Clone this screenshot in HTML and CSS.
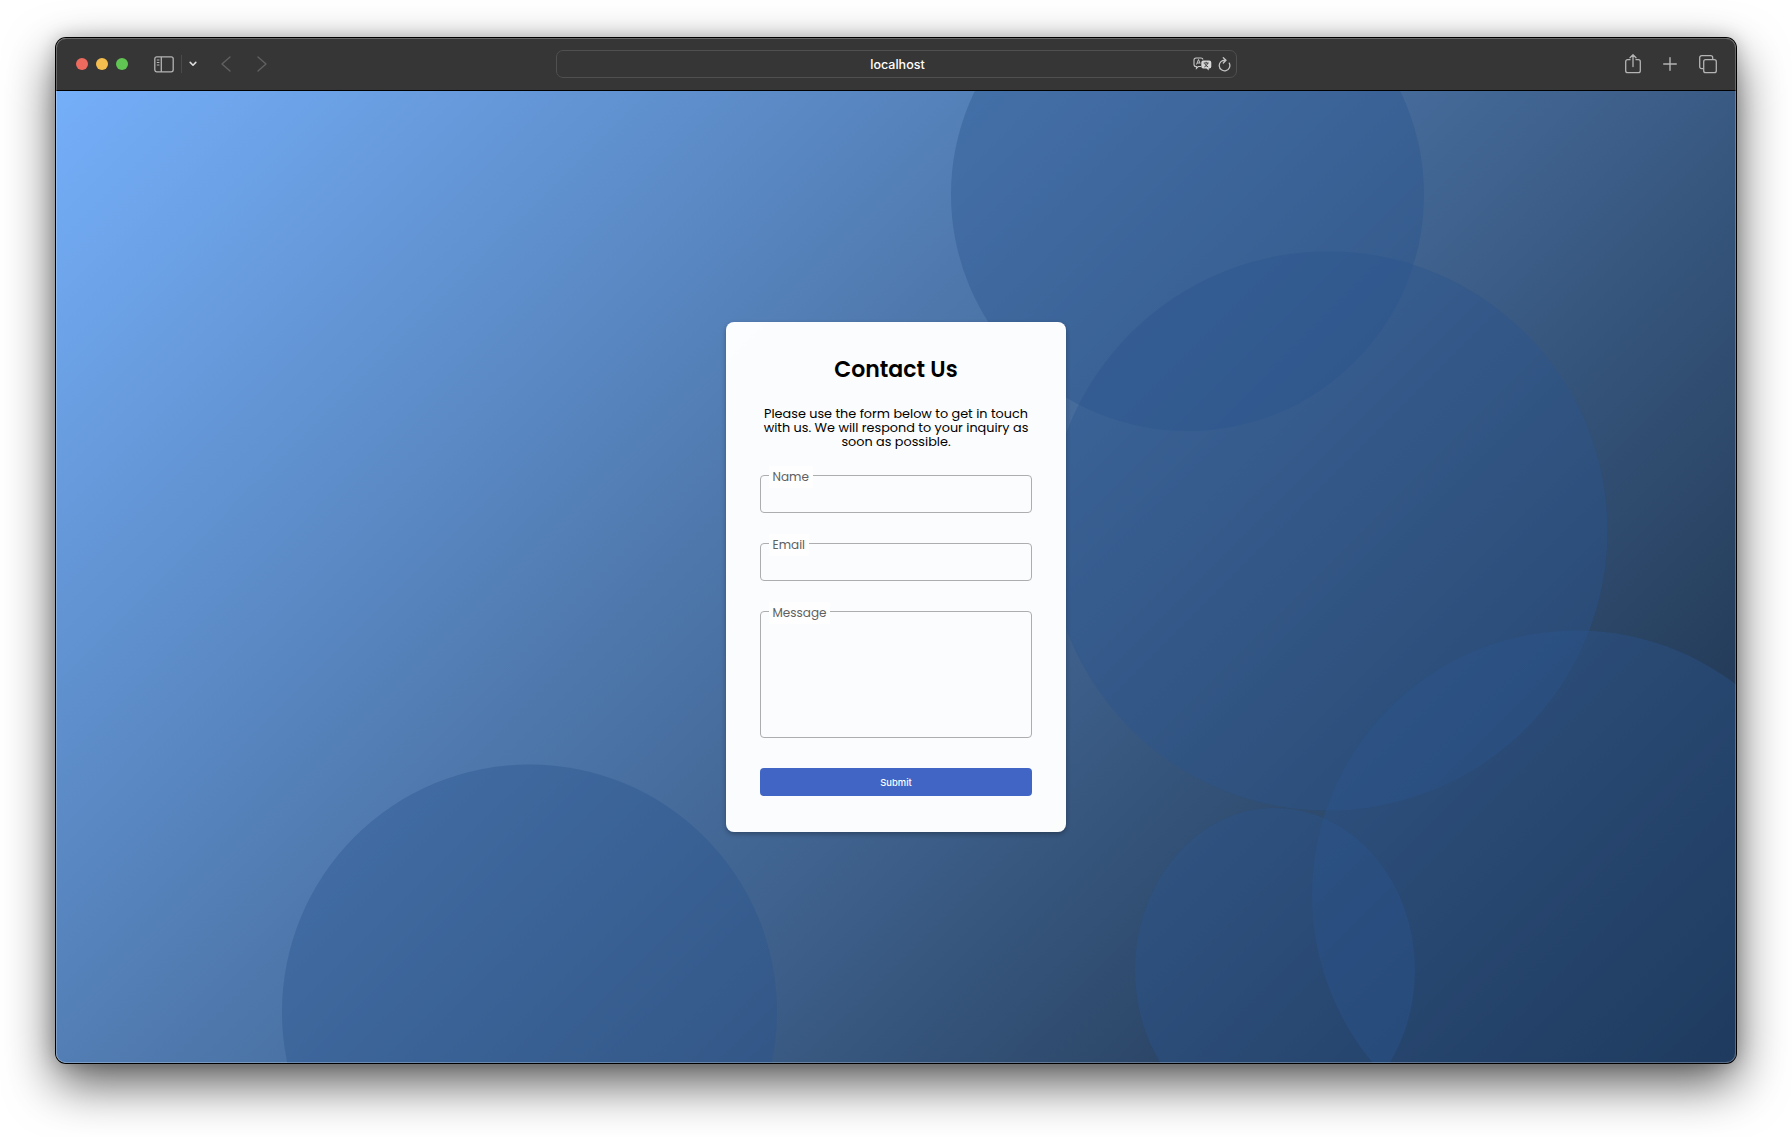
FILE: index.html
```html
<!DOCTYPE html>
<html lang="en">
<head>
<meta charset="utf-8">
<title>Contact Us</title>
<link rel="stylesheet" href="styles.css">
</head>
<body>
<div class="window">
  <header class="toolbar">
    <div class="left">
      <div class="lights"><i class="red"></i><i class="yellow"></i><i class="green"></i></div>
      <svg class="sidebar" width="20" height="17" viewBox="0 0 20 17" fill="none" stroke="#b4b4b4" stroke-width="1.3"><rect x=".8" y=".8" width="18.4" height="15" rx="2"/><path d="M7.3 1v15"/><path d="M2.8 4h2.6M2.8 6.5h2.6M2.8 9h2.6" stroke-width="1"/></svg>
      <span class="divider"></span>
      <svg class="chevron" width="8" height="6" viewBox="0 0 8 6" fill="none" stroke="#dcdcdc" stroke-width="1.6" stroke-linecap="round" stroke-linejoin="round"><path d="M1.2 1.4L4 4.2l2.8-2.8"/></svg>
      <svg class="back" width="10" height="16" viewBox="0 0 10 16" fill="none" stroke="#606060" stroke-width="1.4" stroke-linecap="round" stroke-linejoin="round"><path d="M9 1L1 8l8 7"/></svg>
      <svg class="forward" width="10" height="16" viewBox="0 0 10 16" fill="none" stroke="#606060" stroke-width="1.4" stroke-linecap="round" stroke-linejoin="round"><path d="M1 1l8 7-8 7"/></svg>
    </div>
    <div class="address">
      <span class="host">localhost</span>
      <span class="tools">
        <svg width="19" height="14" viewBox="0 0 19 14" fill="none"><path d="M8 9.5H5.2L3.4 11.4V9.5H3A2 2 0 0 1 1 7.5V3A2 2 0 0 1 3 1h5a2 2 0 0 1 2 1.5" stroke="#c8c8c8" stroke-width="1.1"/><path d="M3.5 7.5l2-5 1.6 4M4.2 6h2.6" stroke="#c8c8c8" stroke-width="1"/><path d="M10.3 3.5h6a2 2 0 0 1 2 2v4a2 2 0 0 1-2 2h-.6v2.1l-2.2-2.1h-3.2a2 2 0 0 1-2-2v-4a2 2 0 0 1 2-2z" fill="#d8d8d8"/><path d="M10.7 6h5M13.2 4.8V6M11.3 10q2.8-1.2 3.4-3.8M11.7 6.5q1 2.6 3.5 3.5" stroke="#363636" stroke-width=".9"/></svg>
        <svg width="13" height="15" viewBox="0 0 13 15" fill="none" stroke="#c4c4c4" stroke-width="1.3" stroke-linecap="round" stroke-linejoin="round"><path d="M11.3 6.2A5.3 5.3 0 1 1 7.3 3.3H5.8M5.3.8l2.7 2.5-2.7 2.7"/></svg>
      </span>
    </div>
    <div class="right">
      <svg width="16" height="20" viewBox="0 0 16 20" fill="none" stroke="#b4b4b4" stroke-width="1.3" stroke-linecap="round" stroke-linejoin="round"><path d="M5 5.7H2.7A2 2 0 0 0 .7 7.7v9a2 2 0 0 0 2 2h10.6a2 2 0 0 0 2-2v-9a2 2 0 0 0-2-2H11M8 12.5V1M5 3.7L8 .8l3 2.9"/></svg>
      <svg width="14" height="14" viewBox="0 0 14 14" fill="none" stroke="#b4b4b4" stroke-width="1.4" stroke-linecap="round"><path d="M7 .7v12.6M.7 7h12.6"/></svg>
      <svg width="18" height="19" viewBox="0 0 18 19" fill="none" stroke="#b4b4b4" stroke-width="1.3"><rect x="4.7" y="4.7" width="12.6" height="13" rx="2"/><path d="M4.5 13.7H2.7a2 2 0 0 1-2-2V2.7a2 2 0 0 1 2-2h9a2 2 0 0 1 2 2V4.7"/></svg>
    </div>
  </header>
  <main class="page">
    <svg class="bubbles" width="1680" height="972" viewBox="0 0 1680 972">
      <circle cx="1131.5" cy="103.5" r="236.5"/>
      <circle cx="1272" cy="440" r="279.5"/>
      <circle cx="1520" cy="803.5" r="264"/>
      <ellipse cx="1219" cy="879" rx="140" ry="162"/>
      <circle cx="473.5" cy="921" r="247.5"/>
    </svg>
    <form class="card">
      <h1>Contact Us</h1>
      <p>Please use the form below to get in touch<br>with us. We will respond to your inquiry as<br>soon as possible.</p>
      <div class="field"><label>Name</label></div>
      <div class="field"><label>Email</label></div>
      <div class="field message"><label>Message</label></div>
      <button type="button">Submit</button>
    </form>
  </main>
</div>
</body>
</html>
```
FILE: styles.css
```css
* { box-sizing: border-box; }
body { margin: 0; padding: 38px 56px 0; background: #fff; height: 1137px; overflow: hidden; font-family: Poppins, "Open Sans", sans-serif; }
.window { position: relative; width: 1680px; height: 1025px; border-radius: 10px; box-shadow: 0 0 0 1px #000, 0 20px 50px rgba(0,0,0,.66), 0 0 18px rgba(0,0,0,.22); overflow: hidden; }
.window::after { content: ""; position: absolute; inset: 0; border-radius: 10px; border: 1px solid rgba(255,255,255,.25); pointer-events: none; }
.toolbar { height: 53px; background: #363636; border-bottom: 1px solid #000; display: grid; grid-template-columns: 500px 681px 1fr; align-items: center; }
.left { display: flex; align-items: center; padding-left: 20px; }
.lights { display: flex; gap: 8px; margin-right: 26px; }
.lights i { width: 12px; height: 12px; border-radius: 50%; }
.red { background: #ed6a5e; }
.yellow { background: #f5bf4f; }
.green { background: #61c554; }
.divider { width: 1px; height: 18px; background: #4a4a4a; margin: 0 7px; }
.chevron { margin-right: 24px; }
.back { margin-right: 26px; }
.address { height: 28px; border: 1px solid #505050; border-radius: 7px; display: grid; grid-template-columns: 1fr auto 1fr; align-items: center; }
.host { grid-column: 2; color: #fff; font: 500 12.5px/16px Inter, sans-serif; padding: 1px 0 0 2px; }
.tools { display: flex; justify-content: flex-end; align-items: center; gap: 6px; padding-right: 5px; }
.right { display: flex; justify-content: flex-end; align-items: center; gap: 22px; padding-right: 19px; }
.page { height: 972px; display: grid; place-items: center; background: linear-gradient(135deg, #75aff9, #17293f); }
.bubbles { grid-area: 1 / 1; fill: #2a548e; fill-opacity: .4; }
.card { grid-area: 1 / 1; position: relative; width: 340px; height: 510px; padding: 33px 34px; border-radius: 8px; background: rgba(255,255,255,.98); box-shadow: 0 2px 5px rgba(0,0,0,.3); display: flex; flex-direction: column; }
h1 { margin: 0; font-size: 22px; line-height: 30px; font-weight: 600; text-align: center; }
p { margin: 22px -10px 0; font-size: 12.8px; line-height: 14px; text-align: center; white-space: nowrap; font-weight: 400; }
.field { height: 38px; flex: none; border: 1px solid #adadb0; border-radius: 4px; margin-top: 30px; padding-left: 8px; }
p + .field { margin-top: 26px; }
.field label { display: block; width: fit-content; margin-top: -10px; padding: 0 4px 0 3.5px; background: #fefefe; color: #606060; font-size: 12px; line-height: 22px; font-weight: 400; }
.message { height: 127px; }
button { height: 28px; margin-top: 30px; border: 0; border-radius: 4px; background: #4065c5; color: #fff; font: 500 9.4px/28px Inter, sans-serif; padding: 1px 0 0; }
```
